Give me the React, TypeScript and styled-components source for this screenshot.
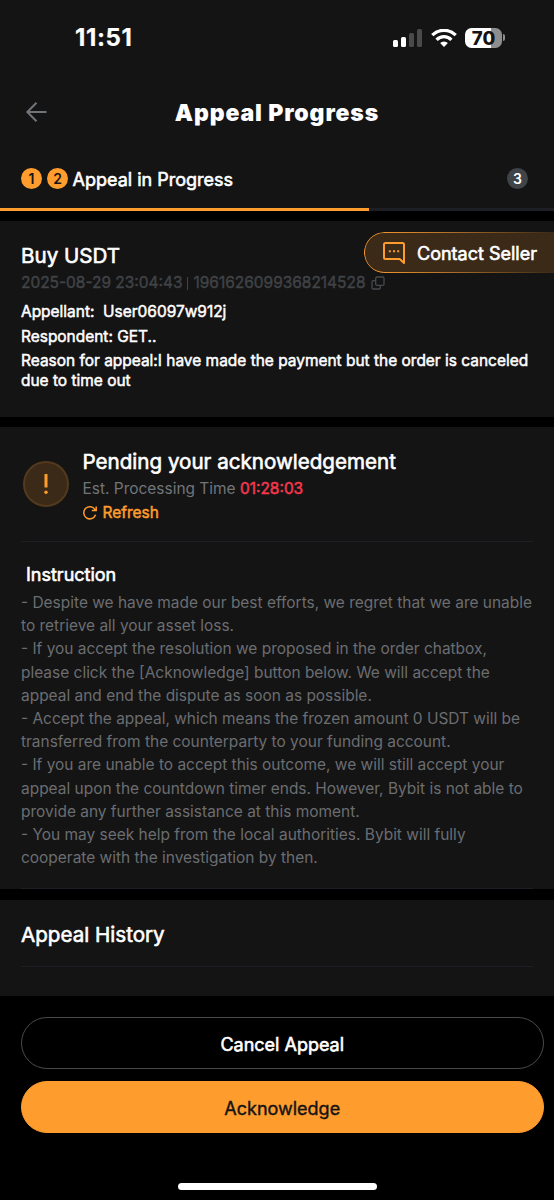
import React from "react";
import styled, { createGlobalStyle } from "styled-components";

const GlobalStyle = createGlobalStyle`
  * { box-sizing: border-box; }
  html, body { margin: 0; background: #000; }
  body { font-family: Inter, "Liberation Sans", sans-serif; color: #fff; }
`;

const Screen = styled.main`
  width: 554px;
  height: 1200px;
  display: flex;
  flex-direction: column;
  background: #000;
  overflow: hidden;
`;

const Text = styled.span<{ $size: number; $line: number; $color?: string; $weight?: number; $track?: number; $stroke?: number }>`
  font-size: ${(p) => p.$size}px;
  line-height: ${(p) => p.$line}px;
  color: ${(p) => p.$color ?? "#fff"};
  font-weight: ${(p) => p.$weight ?? 400};
  letter-spacing: ${(p) => p.$track ?? 0}px;
  -webkit-text-stroke: ${(p) => p.$stroke ?? 0}px currentColor;
  white-space: pre;
`;

const StatusBar = styled.div`
  height: 75px;
  padding: 0 49px 0 75px;
  display: flex;
  align-items: center;
  justify-content: space-between;
  background: #141414;
`;

const StatusIcons = styled.div`
  display: flex;
  align-items: center;
  gap: 8.5px;
`;

const Battery = styled.div`
  display: flex;
  align-items: center;
  gap: 1px;
`;

const BatteryBody = styled.div`
  width: 37px;
  height: 20px;
  border-radius: 6.5px;
  display: flex;
  align-items: center;
  justify-content: center;
  background: linear-gradient(to right, #fff 70%, #8e8e8e 70%);
`;

const BatteryTip = styled.div`
  width: 2px;
  height: 7px;
  border-radius: 0 2px 2px 0;
  background: #8e8e8e;
`;

const NavBar = styled.header`
  height: 74px;
  padding: 0 25px;
  display: grid;
  grid-template-columns: 22px 1fr 22px;
  align-items: center;
  justify-items: center;
  background: #141414;
`;

const NavTitle = styled.div`
  padding-top: 2px;
`;

const Steps = styled.div`
  height: 59px;
  padding: 0 26px 0 21px;
  display: flex;
  align-items: center;
  background: #141414;
`;

const StepLabel = styled.div`
  margin-top: 2px;
  margin-left: -0.5px;
`;

const StepDot = styled.span<{ $done?: boolean }>`
  width: 21px;
  height: 21px;
  margin-right: ${(p) => (p.$done ? 5 : 0)}px;
  border-radius: 50%;
  display: flex;
  align-items: center;
  justify-content: center;
  font-size: 14px;
  font-weight: 600;
  color: ${(p) => (p.$done ? "#141414" : "#fff")};
  background: ${(p) => (p.$done ? "#ff9c2e" : "#404347")};
  &:last-child { margin-left: auto; }
`;

const ProgressTrack = styled.div`
  height: 3px;
  background: #1e1f24;
`;

const ProgressFill = styled.div`
  width: 66.67%;
  height: 3px;
  background: #ff9c2e;
`;

const Card = styled.section<{ $h: number; $gap: number }>`
  height: ${(p) => p.$h}px;
  margin-top: ${(p) => p.$gap}px;
  padding: 0 21px;
  flex: none;
  display: flex;
  flex-direction: column;
  background: #141414;
  position: relative;
`;

const OrderTitle = styled.div`
  height: 51px;
  padding-top: 21px;
`;

const OrderMeta = styled.div`
  display: flex;
  align-items: center;
  height: 22px;
  margin-bottom: 6px;
`;

const Separator = styled.span`
  width: 1px;
  height: 13px;
  margin: 0 5px 0 5px;
  background: #404347;
`;

const CopyButton = styled.span`
  display: flex;
  margin-left: 6px;
`;

const Reason = styled.div`
  margin-top: 2px;
  line-height: 19.5px;
`;

const ContactSeller = styled.button`
  position: absolute;
  top: 11px;
  right: 0;
  width: 190px;
  height: 41px;
  padding: 0 0 0 19px;
  display: flex;
  align-items: center;
  gap: 12px;
  border: 0;
  border-radius: 20.5px 0 0 20.5px;
  background: #3b2a17;
  font-family: inherit;
  &::before {
    content: "";
    position: absolute;
    inset: 0;
    padding: 1.3px 0 1.3px 1.3px;
    border-radius: inherit;
    background: linear-gradient(to right, #ff9c2e 0%, #b9752a 40%, #3b2a17 100%);
    mask: linear-gradient(#000 0 0) content-box exclude, linear-gradient(#000 0 0);
  }
`;

const ContactLabel = styled.div`
  padding-top: 2px;
`;

const Pending = styled.div`
  height: 115px;
  display: flex;
  border-bottom: 1px solid #1e1f24;
`;

const AlertBadge = styled.div`
  width: 46px;
  height: 46px;
  margin: 34px 13px 0 2px;
  border: 2.5px solid #533a1f;
  border-radius: 50%;
  display: flex;
  align-items: center;
  justify-content: center;
  background: #3b2a17;
`;

const PendingInfo = styled.div`
  padding: 21px 0 0 0.5px;
  display: flex;
  flex-direction: column;
`;

const TimeRow = styled.div`
  height: 24px;
  margin-top: 0.5px;
`;

const Refresh = styled.div`
  display: flex;
  align-items: center;
  gap: 4.5px;
  margin-left: -0.5px;
`;

const Instructions = styled.div`
  padding-top: 21px;
  flex: 1;
  display: flex;
  flex-direction: column;
  border-bottom: 1px solid #1e1f24;
`;

const InstructionTitle = styled.div`
  height: 28px;
  padding-left: 5px;
`;

const HistoryHead = styled.div`
  height: 67px;
  padding-top: 3px;
  display: flex;
  align-items: center;
  border-bottom: 1px solid #1e1f24;
`;

const Actions = styled.footer`
  padding: 21px 10px 0 20.5px;
  display: flex;
  flex-direction: column;
  gap: 12px;
`;

const PillButton = styled.button<{ $primary?: boolean }>`
  height: 52px;
  padding: 3px 6px 0;
  border: 1.4px solid ${(p) => (p.$primary ? "#ff9c2e" : "#4a4a4c")};
  border-radius: 26px;
  background: ${(p) => (p.$primary ? "#ff9c2e" : "#000")};
  font-family: inherit;
`;

const HomeIndicator = styled.div`
  width: 199px;
  height: 7px;
  margin: 50px auto 0;
  border-radius: 4px;
  background: #fff;
`;

const SignalIcon = () => (
  <svg width="29" height="18" viewBox="0 0 29 18">
    <rect x="0" y="11" width="5" height="7" rx="1.5" fill="#fff" />
    <rect x="8" y="8" width="5" height="10" rx="1.5" fill="#fff" />
    <rect x="16" y="4" width="5" height="14" rx="1.5" fill="#4a4a4a" />
    <rect x="24" y="0" width="5" height="18" rx="1.5" fill="#4a4a4a" />
  </svg>
);

const WifiIcon = () => (
  <svg width="26" height="18" viewBox="0 0 26 18" fill="none" stroke="#fff" strokeWidth="3.3">
    <path d="M1.3 6.2a16.5 16.5 0 0 1 23.4 0" />
    <path d="M5.600 10.800a10.400 10.400 0 0 1 14.800 0" />
    <path d="M13 18l-3.900-3.900a5.600 5.600 0 0 1 7.800 0z" fill="#fff" stroke="none" />
  </svg>
);

const BackIcon = () => (
  <svg width="22" height="20" viewBox="0 0 22 20" fill="none" stroke="#71757a" strokeWidth="2">
    <path d="M21.500 10H2.500M11.500 .8L2.300 10l9.200 9.200" />
  </svg>
);

const ChatIcon = () => (
  <svg width="22" height="22" viewBox="0 0 22 22" fill="none" stroke="#ff9c2e" strokeWidth="2" strokeLinejoin="round">
    <path d="M2.500 1h17A1.500 1.500 0 0 1 21 2.500V21l-4.300-4H2.500A1.500 1.500 0 0 1 1 15.500v-13A1.500 1.500 0 0 1 2.500 1z" />
    <path d="M5.800 9.200h2M10 9.200h2M14.200 9.200h2" />
  </svg>
);

const CopyIcon = () => (
  <svg width="14" height="14" viewBox="0 0 14 14" fill="none" stroke="#46494e" strokeWidth="1.300">
    <rect x="4.700" y="1" width="8.300" height="8.300" rx="1.200" />
    <path d="M4.700 4.700H2.200A1.200 1.200 0 0 0 1 5.900v5.900A1.200 1.200 0 0 0 2.200 13h5.900a1.200 1.200 0 0 0 1.200-1.200V9.300" />
  </svg>
);

const RefreshIcon = () => (
  <svg width="16" height="16" viewBox="0 0 16 16" fill="none" stroke="#ff9c2e" strokeWidth="1.500">
    <path d="M13.600 9.800A6.100 6.100 0 1 1 13.200 4.800M14.200 1.400v4.200H9.800" />
  </svg>
);

const AlertIcon = () => (
  <svg width="6" height="22" viewBox="0 0 6 22" fill="#ff9c2e">
    <rect x="1.500" y="1" width="3" height="13.500" rx=".6" />
    <circle cx="3" cy="19.200" r="1.700" />
  </svg>
);

const instructionLines = [
  "- Despite we have made our best efforts, we regret that we are unable",
  "to retrieve all your asset loss.",
  "- If you accept the resolution we proposed in the order chatbox,",
  "please click the [Acknowledge] button below. We will accept the",
  "appeal and end the dispute as soon as possible.",
  "- Accept the appeal, which means the frozen amount 0 USDT will be",
  "transferred from the counterparty to your funding account.",
  "- If you are unable to accept this outcome, we will still accept your",
  "appeal upon the countdown timer ends. However, Bybit is not able to",
  "provide any further assistance at this moment.",
  "- You may seek help from the local authorities. Bybit will fully",
  "cooperate with the investigation by then.",
];

export default function App() {
  return (
    <>
      <GlobalStyle />
      <Screen>
        <StatusBar>
          <Text $size={24} $line={28} $weight={700} $track={0.6} $stroke={0.2}>11:51</Text>
          <StatusIcons>
            <SignalIcon />
            <WifiIcon />
            <Battery>
              <BatteryBody>
                <Text $size={18.5} $line={20} $weight={800} $color="#141414">70</Text>
              </BatteryBody>
              <BatteryTip />
            </Battery>
          </StatusIcons>
        </StatusBar>
        <NavBar>
          <BackIcon />
          <NavTitle>
            <Text $size={23} $line={28} $weight={900} $track={0.88}>Appeal Progress</Text>
          </NavTitle>
        </NavBar>
        <Steps>
          <StepDot $done>1</StepDot>
          <StepDot $done>2</StepDot>
          <StepLabel>
            <Text $size={18} $line={24} $stroke={0.6}>Appeal in Progress</Text>
          </StepLabel>
          <StepDot>3</StepDot>
        </Steps>
        <ProgressTrack>
          <ProgressFill />
        </ProgressTrack>

        <Card $h={196} $gap={10}>
          <OrderTitle>
            <Text $size={20.6} $line={28} $stroke={0.6}>Buy USDT</Text>
          </OrderTitle>
          <OrderMeta>
            <Text $size={15.46} $line={20} $color="#404347" $stroke={0.4}>2025-08-29 23:04:43</Text>
            <Separator />
            <Text $size={15.46} $line={20} $color="#404347" $stroke={0.4}>1961626099368214528</Text>
            <CopyButton>
              <CopyIcon />
            </CopyButton>
          </OrderMeta>
          <Text $size={15.46} $line={24.5} $stroke={0.5}>Appellant:  User06097w912j</Text>
          <Text $size={15.46} $line={24.5} $stroke={0.5}>Respondent: GET..</Text>
          <Reason>
            <Text $size={15.46} $line={19.5} $stroke={0.5}>
              {"Reason for appeal:I have made the payment but the order is canceled\ndue to time out"}
            </Text>
          </Reason>
          <ContactSeller>
            <ChatIcon />
            <ContactLabel>
              <Text $size={18} $line={24} $stroke={0.6}>Contact Seller</Text>
            </ContactLabel>
          </ContactSeller>
        </Card>

        <Card $h={462} $gap={10}>
          <Pending>
            <AlertBadge>
              <AlertIcon />
            </AlertBadge>
            <PendingInfo>
              <Text $size={20.6} $line={28} $stroke={0.6}>Pending your acknowledgement</Text>
              <TimeRow>
                <Text $size={15.46} $line={24} $color="#71757a">Est. Processing Time </Text>
                <Text $size={15.46} $line={24} $color="#f6374c" $stroke={0.5}>01:28:03</Text>
              </TimeRow>
              <Refresh>
                <RefreshIcon />
                <Text $size={15.46} $line={24} $color="#ff9c2e" $stroke={0.5}>Refresh</Text>
              </Refresh>
            </PendingInfo>
          </Pending>
          <Instructions>
            <InstructionTitle>
              <Text $size={18} $line={24} $stroke={0.6}>Instruction</Text>
            </InstructionTitle>
            {instructionLines.map((line) => (
              <Text key={line} $size={15.46} $line={23.19} $color="#6b6d71">{line}</Text>
            ))}
          </Instructions>
        </Card>

        <Card $h={96} $gap={11}>
          <HistoryHead>
            <Text $size={20.6} $line={28} $stroke={0.6}>Appeal History</Text>
          </HistoryHead>
        </Card>

        <Actions>
          <PillButton>
            <Text $size={18} $line={24} $stroke={0.6}>Cancel Appeal</Text>
          </PillButton>
          <PillButton $primary>
            <Text $size={18} $line={24} $color="#141414" $stroke={0.4}>Acknowledge</Text>
          </PillButton>
        </Actions>
        <HomeIndicator />
      </Screen>
    </>
  );
}
